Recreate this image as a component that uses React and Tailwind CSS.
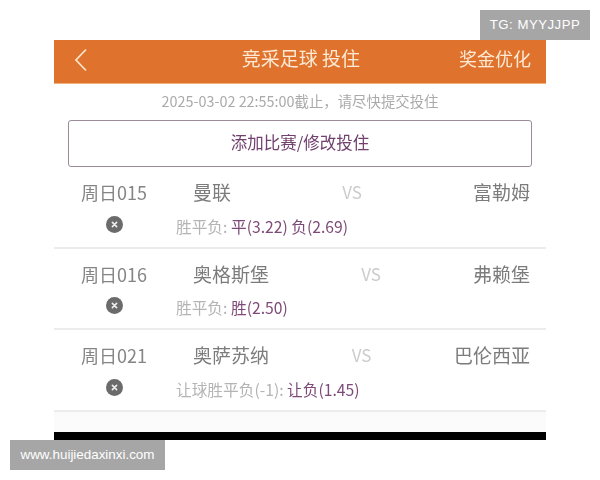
const rows = [
  { id: "周日015", home: "曼联", away: "富勒姆", vs: "VS", label: "胜平负:", pick: "平(3.22) 负(2.69)" },
  { id: "周日016", home: "奥格斯堡", away: "弗赖堡", vs: "VS", label: "胜平负:", pick: "胜(2.50)" },
  { id: "周日021", home: "奥萨苏纳", away: "巴伦西亚", vs: "VS", label: "让球胜平负(-1):", pick: "让负(1.45)" },
];

function CloseDot() {
  return (
    <svg width="17" height="17" viewBox="0 0 17 17" className="block">
      <circle cx="8.5" cy="8.5" r="8.5" fill="#6b6b6b" />
      <path d="M6.4 6.4l4.2 4.2M10.6 6.4l-4.2 4.2" stroke="#eeeeee" strokeWidth="1.6" strokeLinecap="round" />
    </svg>
  );
}

function Row({ r }) {
  return (
    <div className="h-[81.7px] border-b-[2px] border-[#ececec] shrink-0">
      <div className="flex items-center h-[28px] mt-[11px] pl-[27px] pr-[16px]">
        <div className="w-[112px] shrink-0 text-[18px] leading-[28px] text-[#858585]">{r.id}</div>
        <div className="flex-1 flex justify-between items-center text-[19px] leading-[28px] text-[#7c7c7c]">
          <span>{r.home}</span>
          <span className="text-[17px] text-[#cccccc]">{r.vs}</span>
          <span>{r.away}</span>
        </div>
      </div>
      <div className="flex items-center h-[24px] mt-[6px]">
        <div className="w-[120px] shrink-0 flex justify-center"><CloseDot /></div>
        <div className="ml-[2px] text-[15.7px] leading-[24px] text-[#b4b4b4] mt-[5px]">
          {r.label} <span className="text-[#7d4a78]">{r.pick}</span>
        </div>
      </div>
    </div>
  );
}

export default function App() {
  return (
    <div
      className="relative w-[600px] h-[480px] bg-white overflow-hidden"
      style={{ fontFamily: '"Noto Sans CJK SC", "Noto Sans", sans-serif' }}
    >
      <div className="pt-[40px] px-[54px]">
        <div className="w-[492px] h-[400px] flex flex-col bg-white blur-[0.35px]">
          <div className="h-[44px] shrink-0 bg-[#df732d] border-b-[1px] border-[#f3b27c] grid grid-cols-[1fr_auto_1fr] items-center pl-[20px] pr-[15px] text-[#fde9d4]">
            <svg width="14" height="24" viewBox="0 0 14 24" className="block mb-[3px]">
              <path d="M12 1.5L2 12l10 10.5" fill="none" stroke="#fbe3c8" strokeWidth="1.8" />
            </svg>
            <div className="text-[19px] leading-[28px] mb-[8px] mr-[3px]">竞采足球 投住</div>
            <div className="text-[18px] leading-[28px] mb-[8px] text-right">奖金优化</div>
          </div>
          <div className="h-[36px] shrink-0 text-center text-[14.4px] leading-[36px] text-[#aaaaaa] mt-[-1px]">
            2025-03-02 22:55:00截止，请尽快提交投住
          </div>
          <div className="mx-[14px] mt-[1px] w-[464px] h-[47px] shrink-0 border-[1.5px] border-[#9a8a9a] rounded-[3px] flex items-center justify-center text-[16.5px] text-[#71406e] pb-[3px]">
            添加比赛/修改投住
          </div>
          <Row r={rows[0]} />
          <Row r={rows[1]} />
          <Row r={rows[2]} />
          <div className="flex-1 bg-[#fbfbfb]" />
          <div className="h-[8px] shrink-0 bg-black" />
        </div>
      </div>
      <div
        className="absolute top-[10px] left-[480px] w-[110px] h-[30px] bg-[#a6a6a6] flex items-center justify-center text-white text-[13.2px] tracking-[0.5px]"
        style={{ fontFamily: '"Liberation Sans", sans-serif' }}
      >
        TG: MYYJJPP
      </div>
      <div
        className="absolute top-[440px] left-[10px] w-[155px] h-[30px] bg-[#a6a6a6] flex items-center justify-center text-white text-[13.4px]"
        style={{ fontFamily: '"Liberation Sans", sans-serif' }}
      >
        www.huijiedaxinxi.com
      </div>
    </div>
  );
}
